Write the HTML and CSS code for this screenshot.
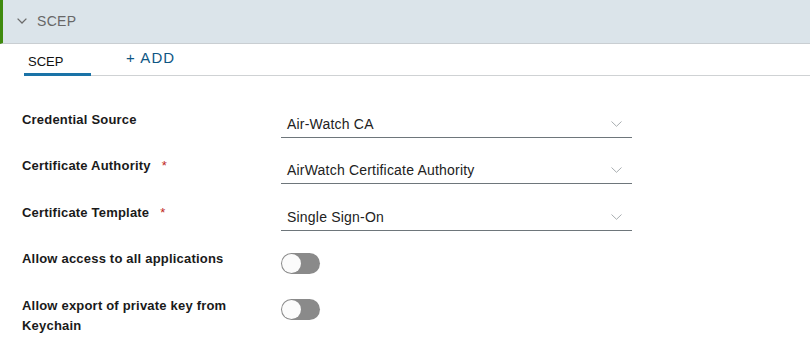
FILE: index.html
```html
<!DOCTYPE html>
<html>
<head>
<meta charset="utf-8">
<link rel="stylesheet" href="styles.css">
</head>
<body>
<div class="panel">
  <div class="acc-header">
    <svg class="acc-chev" width="10" height="6" viewBox="0 0 10 6"><path d="M0.6 0.6 L5 5 L9.4 0.6" fill="none" stroke="#6b6b6b" stroke-width="1.3"/></svg>
    <span class="acc-title">SCEP</span>
  </div>
  <div class="tabs">
    <div class="tab active">SCEP</div>
    <div class="tab-add">+ ADD</div>
  </div>
  <div class="form">
    <div class="row sel-row">
      <div class="label">Credential Source</div>
      <div class="select"><span>Air-Watch CA</span>
        <svg class="sel-chev" width="11" height="6" viewBox="0 0 11 6"><path d="M0.5 0.5 L5.5 5.3 L10.5 0.5" fill="none" stroke="#a8adb0" stroke-width="1"/></svg>
      </div>
    </div>
    <div class="row sel-row r2">
      <div class="label">Certificate Authority<span class="req">*</span></div>
      <div class="select"><span>AirWatch Certificate Authority</span>
        <svg class="sel-chev" width="11" height="6" viewBox="0 0 11 6"><path d="M0.5 0.5 L5.5 5.3 L10.5 0.5" fill="none" stroke="#a8adb0" stroke-width="1"/></svg>
      </div>
    </div>
    <div class="row sel-row r3">
      <div class="label">Certificate Template<span class="req">*</span></div>
      <div class="select"><span>Single Sign-On</span>
        <svg class="sel-chev" width="11" height="6" viewBox="0 0 11 6"><path d="M0.5 0.5 L5.5 5.3 L10.5 0.5" fill="none" stroke="#a8adb0" stroke-width="1"/></svg>
      </div>
    </div>
    <div class="row tog-row t1">
      <div class="label tl">Allow access to all applications</div>
      <div class="toggle"><span class="knob"></span></div>
    </div>
    <div class="row tog-row t2">
      <div class="label tl">Allow export of private key from<br>Keychain</div>
      <div class="toggle"><span class="knob"></span></div>
    </div>
  </div>
</div>
</body>
</html>
```
FILE: styles.css
```css
html, body {
  margin: 0;
  padding: 0;
  background: #ffffff;
}
body {
  font-family: "Liberation Sans", Arial, sans-serif;
  color: #111;
  width: 810px;
  height: 364px;
  overflow: hidden;
}
.acc-header {
  height: 43px;
  background: #dbe4ea;
  border-bottom: 1px solid #c9ced2;
  border-left: 3px solid #3f8a0f;
  box-sizing: content-box;
  display: flex;
  align-items: center;
  padding-left: 14px;
}
.acc-chev {
  display: block;
  margin-right: 10px;
  margin-top: -1px;
}
.acc-title {
  font-size: 14px;
  color: #676767;
  letter-spacing: 0.3px;
  margin-top: -2px;
}
.tabs {
  margin-left: 24px;
  height: 31px;
  border-bottom: 1px solid #cfd2d4;
  display: flex;
  align-items: flex-start;
}
.tab {
  width: 67px;
  padding-left: 4px;
  height: 31px;
  font-size: 13px;
  color: #111;
  line-height: 14px;
  padding-top: 11px;
  box-sizing: border-box;
  margin-bottom: -1px;
}
.tab.active {
  border-bottom: 3px solid #1a73a7;
  height: 32px;
}
.tab-add {
  margin-left: 35px;
  font-size: 15px;
  letter-spacing: 1.1px;
  color: #0e5684;
  line-height: 16px;
  padding-top: 6px;
}
.form {
  padding-left: 22px;
  margin-top: 37px;
}
.row {
  display: grid;
  grid-template-columns: 259px 351px;
  align-items: start;
}
.r2 {
  margin-top: 21px;
}
.r3 {
  margin-top: 22px;
}
.label {
  font-size: 13px;
  font-weight: bold;
  color: #1a1a1a;
  line-height: 14px;
  letter-spacing: 0.2px;
}
.req {
  color: #c0271c;
  font-weight: normal;
  margin-left: 11px;
}
.select {
  height: 25px;
  box-sizing: border-box;
  border-bottom: 1px solid #6e767b;
  display: flex;
  align-items: flex-start;
  justify-content: space-between;
  padding-left: 6px;
  padding-right: 10px;
  font-size: 14px;
  letter-spacing: 0.2px;
  color: #222;
  line-height: 23px;
}
.sel-chev {
  display: block;
  margin-top: 8px;
}
.tog-row .tl {
  line-height: 20px;
}
.t1 {
  margin-top: 18px;
}
.t2 {
  margin-top: 22px;
}
.toggle {
  width: 39px;
  height: 21px;
  border-radius: 11px;
  background: #8a8a8a;
  position: relative;
}
.t1 .toggle {
  margin-top: 4px;
}
.t2 .toggle {
  margin-top: 3px;
}
.knob {
  position: absolute;
  left: 1px;
  top: 1px;
  width: 19px;
  height: 19px;
  border-radius: 50%;
  background: #fbfbfb;
}
```
